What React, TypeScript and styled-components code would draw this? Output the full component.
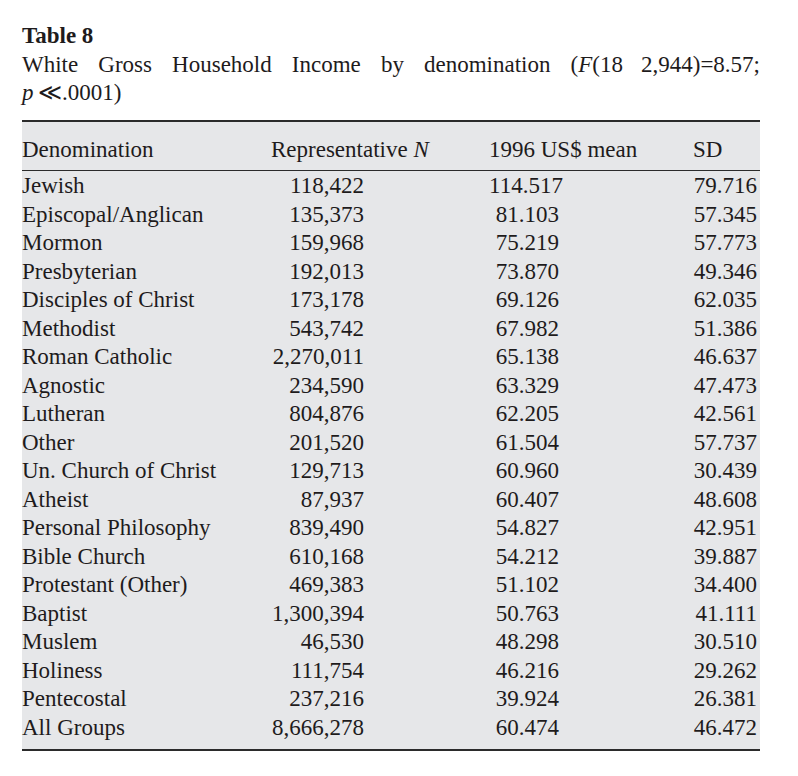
import React from "react";
import styled, { createGlobalStyle } from "styled-components";

const GlobalStyle = createGlobalStyle`
  html, body { margin: 0; padding: 0; background: #ffffff; }
  body { font-family: "Liberation Serif", "Times New Roman", serif; color: #1e1b1c; }
`;

const Page = styled.div`
  width: 738px;
  padding: 22px 38px 20px 22px;
  font-size: 23px;
  line-height: 28.5px;
`;

const Caption = styled.div`
  margin-bottom: 12px;
`;

const CaptionTitle = styled.div`
  font-weight: bold;
`;

const JustifiedLine = styled.div`
  text-align: justify;
  text-align-last: justify;
  white-space: nowrap;
`;

const Gap = styled.span`
  display: inline-block;
  width: 18px;
`;

const Line = styled.div``;

const Table = styled.div`
  background: #e6e7e9;
  border-top: 2px solid #2b2b2b;
  border-bottom: 2px solid #2b2b2b;
`;

const Body = styled.div`
  padding: 1px 0 7px;
`;

const Row = styled.div<{ $head?: boolean }>`
  display: grid;
  grid-template-columns: 249px 218px 204px 1fr;
  height: 28.5px;
  ${(p) =>
    p.$head &&
    `
    height: auto;
    padding: 14px 0 6px;
    border-bottom: 1.5px solid #2b2b2b;
  `}
`;

const HeadCell = styled.div`
  white-space: nowrap;
`;

const Cell = styled.div<{ $right?: number }>`
  white-space: nowrap;
  text-align: ${(p) => (p.$right !== undefined ? "right" : "left")};
  padding-right: ${(p) => p.$right ?? 0}px;
`;

const data: [string, string, string, string][] = [
  ["Jewish", "118,422", "114.517", "79.716"],
  ["Episcopal/Anglican", "135,373", "81.103", "57.345"],
  ["Mormon", "159,968", "75.219", "57.773"],
  ["Presbyterian", "192,013", "73.870", "49.346"],
  ["Disciples of Christ", "173,178", "69.126", "62.035"],
  ["Methodist", "543,742", "67.982", "51.386"],
  ["Roman Catholic", "2,270,011", "65.138", "46.637"],
  ["Agnostic", "234,590", "63.329", "47.473"],
  ["Lutheran", "804,876", "62.205", "42.561"],
  ["Other", "201,520", "61.504", "57.737"],
  ["Un. Church of Christ", "129,713", "60.960", "30.439"],
  ["Atheist", "87,937", "60.407", "48.608"],
  ["Personal Philosophy", "839,490", "54.827", "42.951"],
  ["Bible Church", "610,168", "54.212", "39.887"],
  ["Protestant (Other)", "469,383", "51.102", "34.400"],
  ["Baptist", "1,300,394", "50.763", "41.111"],
  ["Muslem", "46,530", "48.298", "30.510"],
  ["Holiness", "111,754", "46.216", "29.262"],
  ["Pentecostal", "237,216", "39.924", "26.381"],
  ["All Groups", "8,666,278", "60.474", "46.472"],
];

export default function App() {
  return (
    <>
      <GlobalStyle />
      <Page>
        <Caption>
          <CaptionTitle>Table 8</CaptionTitle>
          <JustifiedLine>
            White Gross Household Income by denomination (<i>F</i>(18<Gap />2,944)=8.57;
          </JustifiedLine>
          <Line>
            <i>p</i>&thinsp;≪.0001)
          </Line>
        </Caption>
        <Table>
          <Row $head>
            <HeadCell>Denomination</HeadCell>
            <HeadCell>
              Representative <i>N</i>
            </HeadCell>
            <HeadCell>1996 US$ mean</HeadCell>
            <HeadCell>SD</HeadCell>
          </Row>
          <Body>
            {data.map(([name, n, mean, sd]) => (
              <Row key={name}>
                <Cell>{name}</Cell>
                <Cell $right={125}>{n}</Cell>
                <Cell $right={134}>{mean}</Cell>
                <Cell $right={3}>{sd}</Cell>
              </Row>
            ))}
          </Body>
        </Table>
      </Page>
    </>
  );
}
